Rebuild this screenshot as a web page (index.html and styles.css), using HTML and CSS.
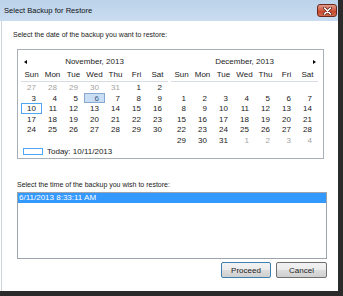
FILE: index.html
```html
<!DOCTYPE html>
<html lang="en">
<head>
    <meta charset="utf-8">
    <title>Select Backup for Restore</title>
    <link rel="stylesheet" href="styles.css">
</head>
<body>
<div class="window">
    <div class="titlebar">
        <span class="title">Select Backup for Restore</span>
        <button class="close" type="button">
            <svg width="9" height="8" viewBox="0 0 9 8">
                <path d="M1.5 1 L7.5 7 M7.5 1 L1.5 7" stroke="#5a1d14" stroke-width="3" stroke-linecap="round"/>
                <path d="M1.5 1 L7.5 7 M7.5 1 L1.5 7" stroke="#fff" stroke-width="1.6" stroke-linecap="round"/>
            </svg>
        </button>
    </div>

    <div class="client">
        <p class="prompt prompt-date">Select the date of the backup you want to restore:</p>

        <div class="calendar">
            <div class="months">
                <div class="month">
                    <div class="month-head">
                        <span class="arrow prev"></span>
                        <span class="month-name">November, 2013</span>
                    </div>
                    <div class="weekdays">
                        <span>Sun</span><span>Mon</span><span>Tue</span><span>Wed</span><span>Thu</span><span>Fri</span><span>Sat</span>
                    </div>
                    <div class="dates">
                        <span class="other">27</span><span class="other">28</span><span class="other">29</span><span class="other">30</span><span class="other">31</span><span>1</span><span>2</span>
                        <span>3</span><span>4</span><span>5</span><span class="selected">6</span><span>7</span><span>8</span><span>9</span>
                        <span class="today">10</span><span>11</span><span>12</span><span>13</span><span>14</span><span>15</span><span>16</span>
                        <span>17</span><span>18</span><span>19</span><span>20</span><span>21</span><span>22</span><span>23</span>
                        <span>24</span><span>25</span><span>26</span><span>27</span><span>28</span><span>29</span><span>30</span>
                    </div>
                </div>

                <div class="month">
                    <div class="month-head">
                        <span class="month-name">December, 2013</span>
                        <span class="arrow next"></span>
                    </div>
                    <div class="weekdays">
                        <span>Sun</span><span>Mon</span><span>Tue</span><span>Wed</span><span>Thu</span><span>Fri</span><span>Sat</span>
                    </div>
                    <div class="dates">
                        <span></span><span></span><span></span><span></span><span></span><span></span><span></span>
                        <span>1</span><span>2</span><span>3</span><span>4</span><span>5</span><span>6</span><span>7</span>
                        <span>8</span><span>9</span><span>10</span><span>11</span><span>12</span><span>13</span><span>14</span>
                        <span>15</span><span>16</span><span>17</span><span>18</span><span>19</span><span>20</span><span>21</span>
                        <span>22</span><span>23</span><span>24</span><span>25</span><span>26</span><span>27</span><span>28</span>
                        <span>29</span><span>30</span><span>31</span><span class="other">1</span><span class="other">2</span><span class="other">3</span><span class="other">4</span>
                    </div>
                </div>
            </div>
            <div class="today-row">
                <span class="today-box"></span>
                <span>Today: 10/11/2013</span>
            </div>
        </div>

        <p class="prompt prompt-time">Select the time of the backup you wish to restore:</p>
        <div class="listbox">
            <div class="item selected">6/11/2013 8:33:11 AM</div>
        </div>

        <div class="buttons">
            <button class="btn default" type="button">Proceed</button>
            <button class="btn" type="button">Cancel</button>
        </div>
    </div>
</div>
</body>
</html>
```

FILE: styles.css
```css
body {
    margin: 0;
    background: #fff;
    font: 8px "Liberation Sans", Arial, sans-serif;
    color: #1a1a1a;
}

.window {
    width: 343px;
    height: 296px;
    box-sizing: border-box;
    display: flex;
    flex-direction: column;
    background: #fff;
    border-right: 5px solid #2b2b2b;
    border-bottom: 5px solid #2b2b2b;
}

.titlebar {
    height: 21px;
    flex: none;
    display: flex;
    align-items: flex-start;
    justify-content: space-between;
    background: linear-gradient(#bcd2ea, #c9dcf0);
}

.title {
    padding: 6px 0 0 4px;
    font-size: 7.6px;
    line-height: 10px;
    color: #111;
}

.close {
    width: 20px;
    height: 13px;
    margin: 4px 1px 0 0;
    padding: 0;
    display: flex;
    align-items: center;
    justify-content: center;
    border: 1px solid #6b2a20;
    border-radius: 3px;
    background: linear-gradient(#e39a89, #d05a42 50%, #c2442a 51%, #d26a4c);
}

.client {
    flex: 1;
    margin-left: 1px;
    border-left: 1px solid #cdd3da;
    display: flex;
    flex-direction: column;
}

.prompt {
    margin: 0;
    font-size: 7px;
    line-height: 10px;
    white-space: nowrap;
}

.prompt-date {
    margin: 9px 0 9px 11px;
}

.calendar {
    margin-left: 15px;
    width: 307px;
    box-sizing: border-box;
    padding: 5px 3px 2px;
    border: 1px solid #a9afb6;
}

.months {
    display: flex;
    gap: 3px;
}

.month {
    width: 147px;
}

.month-head {
    height: 14px;
    display: flex;
    align-items: center;
    position: relative;
    color: #1e1e1e;
}

.month-name {
    flex: 1;
    text-align: center;
    line-height: 10px;
}

.arrow {
    position: absolute;
    top: 5px;
    width: 0;
    height: 0;
    border-top: 2.5px solid transparent;
    border-bottom: 2.5px solid transparent;
}

.arrow.prev {
    left: 3px;
    border-right: 3px solid #000;
}

.arrow.next {
    right: 2px;
    border-left: 3px solid #000;
}

.weekdays,
.dates {
    display: grid;
    grid-template-columns: repeat(7, 21px);
}

.weekdays {
    height: 12px;
    border-bottom: 1px solid #d8dde3;
}

.weekdays span {
    text-align: center;
    line-height: 12px;
}

.dates {
    grid-template-rows: 11px 10px 11px 10px 11px 11px;
}

.dates span {
    box-sizing: border-box;
    padding-right: 6px;
    display: flex;
    align-items: center;
    justify-content: flex-end;
}

.dates .other {
    color: #a3a3a3;
}

.dates .selected {
    color: #3c5a80;
    background: #c9ddf3;
    border: 1px solid #87a9d0;
    padding-right: 5px;
}

.dates .today {
    border: 1px solid #4ea6f4;
    padding-right: 5px;
}

.today-row {
    height: 10px;
    display: flex;
    align-items: center;
    gap: 4px;
    padding-left: 2px;
}

.today-box {
    width: 20px;
    height: 7px;
    box-sizing: border-box;
    border: 1px solid #4ea6f4;
}

.prompt-time {
    margin: 21px 0 2px 15px;
}

.listbox {
    margin-left: 15px;
    width: 310px;
    height: 67px;
    box-sizing: border-box;
    border: 1px solid #9da4ad;
}

.item {
    height: 10px;
    line-height: 10px;
    padding-left: 1px;
}

.item.selected {
    background: #3399ff;
    color: #fff;
}

.buttons {
    display: flex;
    justify-content: flex-end;
    gap: 5px;
    margin: 3px 11px 0 0;
}

.btn {
    width: 51px;
    height: 16px;
    padding: 0;
    font: 8px "Liberation Sans", Arial, sans-serif;
    color: #1a1a1a;
    border: 1px solid #707070;
    border-radius: 2px;
    background: linear-gradient(#f2f2f2, #ebebeb 50%, #dddddd 51%, #cfcfcf);
}

.btn.default {
    width: 50px;
    border-color: #3c7fb1;
}
```
